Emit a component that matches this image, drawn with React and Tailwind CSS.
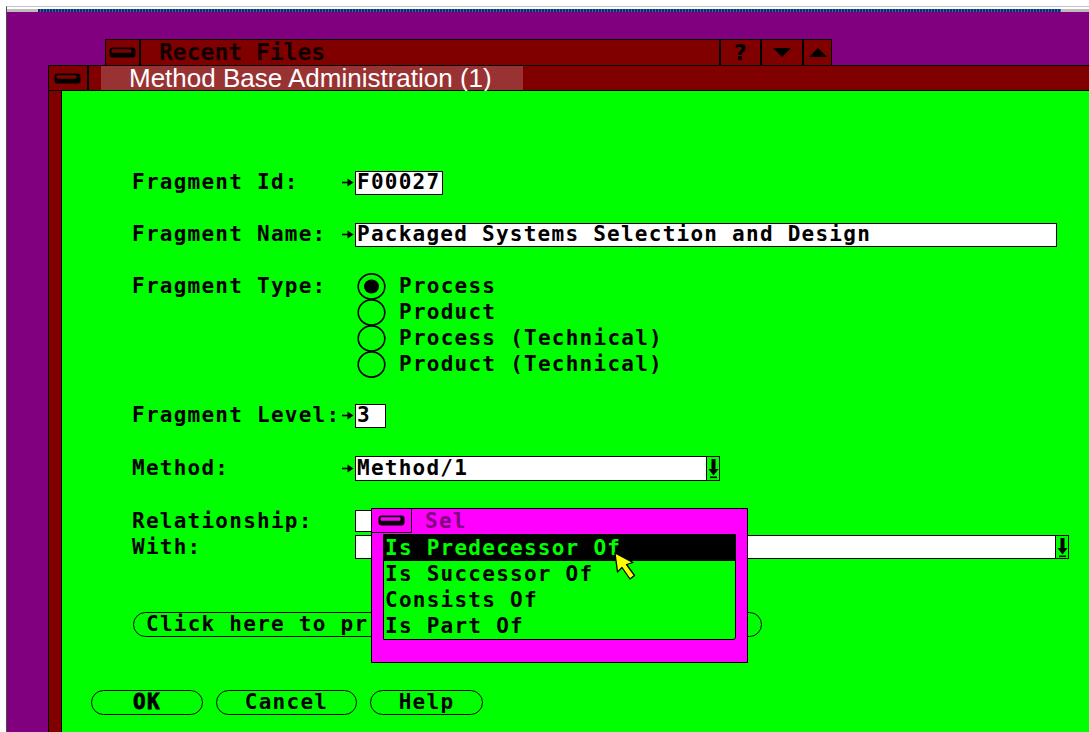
const mono = "font-['DejaVu_Sans_Mono',monospace] font-bold text-[21px] tracking-[1.25px] leading-none";

function SysMenuIcon({ fill }) {
  return (
    <svg width="28" height="11" viewBox="0 0 28 11">
      <rect x="0.5" y="0.5" width="26" height="10" rx="3" fill="#000" />
      <rect x="2.5" y="2.2" width="20" height="3.6" rx="1.4" fill={fill} />
    </svg>
  );
}

function FieldArrow() {
  return (
    <div className="w-[13px] shrink-0 flex items-center">
      <svg width="12" height="9" viewBox="0 0 12 9">
        <path d="M0 4.5 H8" stroke="#000" strokeWidth="1.6" />
        <path d="M5.5 0.5 L11.5 4.5 L5.5 8.5 Z" fill="#000" />
      </svg>
    </div>
  );
}

function DropButton() {
  return (
    <div className="w-[13px] h-full shrink-0 border-l border-black bg-[#00ff00] flex items-center justify-center">
      <svg width="11" height="21" viewBox="0 0 11 21">
        <rect x="3.5" y="1" width="4" height="11" fill="#000" />
        <path d="M0.5 11 H10.5 L5.5 17.5 Z" fill="#000" />
        <rect x="2" y="18.5" width="7" height="1.6" fill="#000" />
      </svg>
    </div>
  );
}

function Radio({ checked, label }) {
  return (
    <div className="h-[26px] flex items-center gap-[13px]">
      <svg width="29" height="27" viewBox="0 0 29 27" className="shrink-0">
        <ellipse cx="14.5" cy="13.5" rx="13.3" ry="12.6" fill="none" stroke="#000" strokeWidth="1.6" />
        {checked && <ellipse cx="14.5" cy="13.5" rx="7.5" ry="7" fill="#000" />}
      </svg>
      <span className={mono}>{label}</span>
    </div>
  );
}

function Label({ children }) {
  return <div className={`w-[210px] shrink-0 ${mono}`}>{children}</div>;
}

function Pill({ width, bold, children }) {
  return (
    <div
      className={`${width} h-[25px] shrink-0 rounded-full border-[1.5px] border-black flex items-center justify-center overflow-hidden ${mono} ${bold ? "[-webkit-text-stroke:0.8px_#000]" : ""}`}
    >
      {children}
    </div>
  );
}

function RecentFilesBar() {
  return (
    <div className="absolute left-[98px] top-[27px] w-[727px] h-[27px] flex border border-black bg-[#800000]">
      <div className="w-[35px] shrink-0 border-r-2 border-black flex items-center justify-center">
        <SysMenuIcon fill="#800000" />
      </div>
      <div className="flex-1 pl-[18px] flex items-center font-['DejaVu_Sans_Mono',monospace] font-bold text-[23px] leading-none text-[#120000]">
        Recent Files
      </div>
      <div className="w-[41px] shrink-0 border-l-2 border-black flex items-center justify-center font-['DejaVu_Sans',sans-serif] font-bold text-[22px] leading-none text-black">
        ?
      </div>
      <div className="w-[42px] shrink-0 border-l-2 border-black flex items-center justify-center">
        <svg width="18" height="9" viewBox="0 0 18 9">
          <path d="M0 0 H18 L9 9 Z" fill="#000" />
        </svg>
      </div>
      <div className="w-[29px] shrink-0 border-l-2 border-black flex items-center justify-center">
        <svg width="18" height="9" viewBox="0 0 18 9">
          <path d="M0 9 H18 L9 0 Z" fill="#000" />
        </svg>
      </div>
    </div>
  );
}

function RelationPopup() {
  const items = ["Is Predecessor Of", "Is Successor Of", "Consists Of", "Is Part Of"];
  return (
    <div className="absolute left-[309px] top-[417px] w-[377px] h-[155px] bg-[#ff00ff] border border-black">
      <div className="h-[24px] flex">
        <div className="w-[40px] border-r border-b border-black flex items-center justify-center">
          <SysMenuIcon fill="#ff00ff" />
        </div>
        <div className={`pl-[13px] flex items-center text-[#800080] ${mono}`}>Sel</div>
      </div>
      <div className="ml-[11px] mt-[1px] w-[353px] h-[106px] border border-black rounded-br-[3px] bg-[#00ff00] flex flex-col overflow-hidden">
        {items.map((item, i) => (
          <div
            key={item}
            className={`h-[26px] shrink-0 flex items-center pl-[1px] ${mono} ${
              i === 0 ? "bg-black text-[#00ff00]" : "text-black"
            }`}
          >
            {item}
          </div>
        ))}
      </div>
    </div>
  );
}

function FragmentForm() {
  return (
    <div className="flex-1 relative bg-[#00ff00] text-black">
      <div className="pl-[70px] flex flex-col">
        <div className="mt-[79px] h-[25px] flex items-center">
          <Label>Fragment Id:</Label>
          <FieldArrow />
          <div className={`h-[24px] pl-[1px] pr-[2px] border border-black bg-white flex items-center ${mono}`}>F00027</div>
        </div>

        <div className="mt-[27px] h-[25px] flex items-center">
          <Label>Fragment Name:</Label>
          <FieldArrow />
          <div className={`w-[702px] h-[24px] pl-[1px] border border-black bg-white flex items-center ${mono}`}>
            Packaged Systems Selection and Design
          </div>
        </div>

        <div className="mt-[26px] flex items-start">
          <div className="h-[26px] flex items-center">
            <Label>Fragment Type:</Label>
          </div>
          <div className="w-[15px] shrink-0" />
          <div className="flex flex-col">
            <Radio checked label="Process" />
            <Radio label="Product" />
            <Radio label="Process (Technical)" />
            <Radio label="Product (Technical)" />
          </div>
        </div>

        <div className="mt-[26px] h-[25px] flex items-center">
          <Label>Fragment Level:</Label>
          <FieldArrow />
          <div className={`w-[31px] h-[24px] pl-[1px] border border-black bg-white flex items-center ${mono}`}>3</div>
        </div>

        <div className="mt-[28px] h-[25px] flex items-center">
          <Label>Method:</Label>
          <FieldArrow />
          <div className="w-[365px] h-[25px] border border-black bg-white flex items-center">
            <div className={`flex-1 pl-[1px] ${mono}`}>Method/1</div>
            <DropButton />
          </div>
        </div>

        <div className="mt-[27px] h-[26px] flex items-center">
          <Label>Relationship:</Label>
          <div className="w-[13px] shrink-0" />
          <div className="w-[220px] h-[22px] border border-black bg-white" />
        </div>

        <div className="h-[26px] flex items-center">
          <Label>With:</Label>
          <div className="w-[13px] shrink-0" />
          <div className="w-[714px] h-[24px] border border-black bg-white flex items-center">
            <div className="flex-1" />
            <DropButton />
          </div>
        </div>

        <div className="mt-[52px] ml-[1px] flex">
          <div className="w-[629px] h-[25px] rounded-full border-[1.5px] border-black flex items-center pl-[12px] overflow-hidden">
            {/* the list window covers the rest of this caption */}
            <span className={`whitespace-nowrap ${mono}`}>Click here to pr</span>
          </div>
        </div>
      </div>

      <div className="mt-[53px] pl-[29px] flex gap-[13px]">
        <Pill width="w-[112px]" bold>OK</Pill>
        <Pill width="w-[141px]">Cancel</Pill>
        <Pill width="w-[113px]">Help</Pill>
      </div>

      <RelationPopup />

      {/* mouse pointer over the list */}
      <svg className="absolute left-[551px] top-[461px]" width="26" height="30" viewBox="0 0 26 30">
        <path
          d="M2 1 L4.5 20 L9 15.5 L17 27 L21.5 23.5 L13.5 12.5 L20 10.5 Z"
          fill="#ffff00"
          stroke="#000"
          strokeWidth="1.3"
          strokeLinejoin="round"
        />
      </svg>
    </div>
  );
}

function MethodBaseWindow() {
  return (
    <div className="absolute left-[41px] top-[53px] right-[-20px] bottom-0 flex flex-col bg-[#800000] border-l border-black">
      <div className="h-[26px] shrink-0 flex border-y border-black">
        <div className="w-[40px] shrink-0 border-r-2 border-black flex items-center justify-center">
          <SysMenuIcon fill="#800000" />
        </div>
        <div className="w-[12px] shrink-0" />
        <div className="w-[422px] shrink-0 bg-[#993333] pl-[28px] flex items-center font-['Liberation_Sans',sans-serif] text-[26px] leading-none text-white">
          Method Base Administration (1)
        </div>
        <div className="flex-1" />
      </div>
      <div className="flex-1 flex min-h-0">
        <div className="w-[13px] shrink-0 border-r border-black" />
        <FragmentForm />
      </div>
    </div>
  );
}

export default function App() {
  return (
    <div className="w-[1089px] h-[732px] overflow-hidden bg-white flex flex-col">
      <div className="h-[6px] shrink-0" />
      <div className="flex-1 flex min-h-0">
        <div className="w-[6px] shrink-0" />
        <div className="flex-1 min-w-0 flex flex-col border-l border-t border-l-[#4a4a4a] border-t-[#c4c4c4]">
          <div className="h-[2px] shrink-0 bg-white" />
          <div className="h-[3px] shrink-0 flex">
            <div className="w-[31px] bg-[#bdbdbd]" />
            <div className="flex-1 bg-[repeating-linear-gradient(90deg,#0d2f6e_0_2px,#3a67b5_2px_3px)]" />
            <div className="w-[28px] bg-[#bdbdbd]" />
          </div>
          <div className="flex-1 relative overflow-hidden bg-[#800080]">
            <RecentFilesBar />
            <MethodBaseWindow />
          </div>
        </div>
      </div>
    </div>
  );
}
